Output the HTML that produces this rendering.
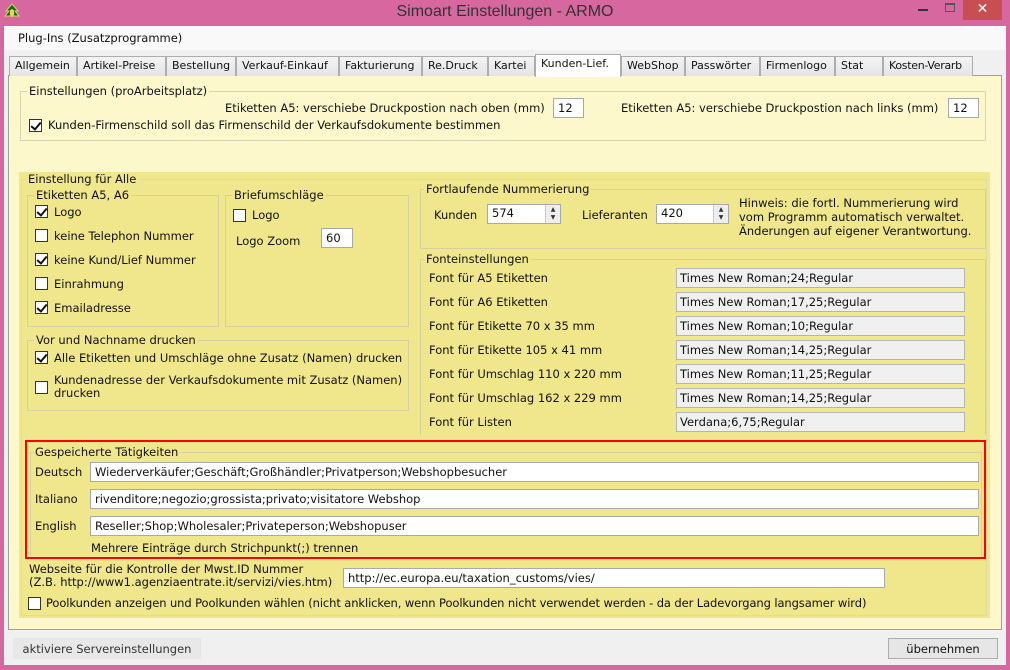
<!DOCTYPE html>
<html><head><meta charset="utf-8"><style>
*{margin:0;padding:0;box-sizing:border-box}
body{width:1010px;height:670px;background:#d6689f;font-family:"DejaVu Sans",Verdana,"Liberation Sans",sans-serif;font-size:11px;color:#111;position:relative;overflow:hidden}
.a{position:absolute;white-space:nowrap}
.win{position:absolute;left:4px;top:26px;width:1002px;height:639px;background:#f0f0f0}
.menu{position:absolute;left:4px;top:26px;width:1002px;height:24px;background:#f9f9f9}
.tab{position:absolute;top:56px;height:20px;background:linear-gradient(#f4f4f4,#e4e4e4);border:1px solid #adadad;border-bottom:none;padding:2px 0 0 5px;font-size:11px;white-space:nowrap;overflow:hidden}
.panel{position:absolute;left:8px;top:75px;width:994px;height:555px;background:#fdf8cc;border:1px solid #a0a0a0}
.grp{position:absolute;border:1px solid #d8d4b0}
.lg{position:absolute;top:-8px;left:6px;padding:0 2px;font-size:11.5px;white-space:nowrap}
.cb{position:absolute;width:13px;height:13px;border:1px solid #333;background:#fff}
.cb.c::after{content:"";position:absolute;left:3px;top:0px;width:4px;height:8px;border:solid #111;border-width:0 2px 2px 0;transform:rotate(40deg)}
.in{position:absolute;height:20px;background:#fff;border:1px solid #a9a9a9;padding:2px 4px;font-size:11.5px;white-space:nowrap;overflow:hidden}
.fb{position:absolute;left:676px;width:289px;height:20px;background:#f0f0f0;border:1px solid #b4b4b4;padding:2px 3px;font-size:11.5px}
.t{font-size:11.5px}
.sp{position:absolute;right:0;top:0;width:15px;height:18px;border-left:1px solid #ccc;background:#eee;font-size:6px;line-height:8px;text-align:center;color:#333;padding-top:1px}
.btn{position:absolute;height:21px;border:1px solid #adadad;background:#e6e6e6;font-size:11.5px;text-align:center;padding-top:3px}
</style></head><body>
<svg class="a" style="left:4px;top:3px" width="16" height="16" viewBox="0 0 16 16"><path d="M8 1L14 8H11L15 13H1L5 8H2Z" fill="#0d6b1a" stroke="#d8d060" stroke-width="1"/><ellipse cx="8" cy="10" rx="2.2" ry="4" fill="#e6d55a"/></svg>
<div class="a" style="left:0;width:1010px;top:3px;text-align:center;font-size:16px;color:#333;font-family:'Liberation Sans','DejaVu Sans',sans-serif">Simoart Einstellungen - ARMO</div>
<div class="a" style="left:918px;top:9px;width:10px;height:2px;background:#333"></div>
<div class="a" style="left:945px;top:3px;width:10px;height:9px;border:1px solid #555;border-top-width:2px"></div>
<div class="a" style="left:963px;top:0;width:39px;height:20px;background:#c74f51;color:#fff;text-align:center;font-size:14px;line-height:19px">✕</div>
<div class="win"></div>
<div class="menu"></div>
<div class="a t" style="left:18px;top:31px">Plug-Ins (Zusatzprogramme)</div>
<div class="panel"></div>
<div class="tab" style="left:9px;width:68px">Allgemein</div>
<div class="tab" style="left:77px;width:89px">Artikel-Preise</div>
<div class="tab" style="left:166px;width:70px">Bestellung</div>
<div class="tab" style="left:236px;width:103px">Verkauf-Einkauf</div>
<div class="tab" style="left:339px;width:83px">Fakturierung</div>
<div class="tab" style="left:422px;width:66px">Re.Druck</div>
<div class="tab" style="left:488px;width:47px">Kartei</div>
<div class="tab" style="left:535px;top:54px;height:23px;width:86px;background:#fff;padding-top:2px">Kunden-Lief.</div>
<div class="tab" style="left:621px;width:64px">WebShop</div>
<div class="tab" style="left:685px;width:75px">Passwörter</div>
<div class="tab" style="left:760px;width:75px">Firmenlogo</div>
<div class="tab" style="left:835px;width:48px">Stat</div>
<div class="tab" style="left:883px;width:90px;letter-spacing:-0.3px">Kosten-Verarb</div>

<div class="grp" style="left:20px;top:91px;width:966px;height:50px"><div class="lg" style="background:#fdf8cc">Einstellungen (proArbeitsplatz)</div></div>
<div class="a t" style="left:225px;top:101px">Etiketten A5: verschiebe Druckpostion nach oben (mm)</div>
<div class="in" style="left:553px;top:98px;width:31px">12</div>
<div class="a t" style="left:621px;top:101px">Etiketten A5: verschiebe Druckpostion nach links (mm)</div>
<div class="in" style="left:948px;top:98px;width:31px">12</div>
<div class="cb c" style="left:29px;top:119px"></div>
<div class="a t" style="left:48px;top:118px">Kunden-Firmenschild soll das Firmenschild der Verkaufsdokumente bestimmen</div>

<div class="a" style="left:19px;top:172px;width:971px;height:446px;background:#f0e68c"></div>
<div class="grp" style="left:21px;top:179px;width:966px;height:437px;border-color:#e2dca0"><div class="lg" style="background:#f0e68c;top:-8px;left:4px">Einstellung für Alle</div></div>
<div class="grp" style="left:27px;top:195px;width:192px;height:132px;border-color:#d6d0a0"><div class="lg" style="background:#f0e68c">Etiketten A5, A6</div></div>
<div class="cb c" style="left:35px;top:205px"></div><div class="a t" style="left:54px;top:205px">Logo</div>
<div class="cb" style="left:35px;top:229px"></div><div class="a t" style="left:54px;top:229px">keine Telephon Nummer</div>
<div class="cb c" style="left:35px;top:253px"></div><div class="a t" style="left:54px;top:253px">keine Kund/Lief Nummer</div>
<div class="cb" style="left:35px;top:277px"></div><div class="a t" style="left:54px;top:277px">Einrahmung</div>
<div class="cb c" style="left:35px;top:301px"></div><div class="a t" style="left:54px;top:301px">Emailadresse</div>
<div class="grp" style="left:225px;top:195px;width:184px;height:132px;border-color:#d6d0a0"><div class="lg" style="background:#f0e68c">Briefumschläge</div></div>
<div class="cb" style="left:233px;top:209px"></div><div class="a t" style="left:252px;top:208px">Logo</div>
<div class="a t" style="left:236px;top:234px">Logo Zoom</div>
<div class="in" style="left:321px;top:228px;width:32px">60</div>
<div class="grp" style="left:27px;top:340px;width:382px;height:71px;border-color:#d6d0a0"><div class="lg" style="background:#f0e68c">Vor und Nachname drucken</div></div>
<div class="cb c" style="left:35px;top:351px"></div><div class="a t" style="left:54px;top:351px">Alle Etiketten und Umschläge ohne Zusatz (Namen) drucken</div>
<div class="cb" style="left:35px;top:381px"></div><div class="a t" style="left:54px;top:374px;line-height:13px">Kundenadresse der Verkaufsdokumente mit Zusatz (Namen)<br>drucken</div>

<div class="grp" style="left:420px;top:189px;width:566px;height:60px;border-color:#d6d0a0"><div class="lg" style="background:#f0e68c;left:3px">Fortlaufende Nummerierung</div></div>
<div class="a t" style="left:434px;top:208px">Kunden</div>
<div class="in" style="left:487px;top:204px;width:74px;padding-top:1px">574<div class="sp">▲<br>▼</div></div>
<div class="a t" style="left:582px;top:208px">Lieferanten</div>
<div class="in" style="left:656px;top:204px;width:73px;padding-top:1px">420<div class="sp">▲<br>▼</div></div>
<div class="a t" style="left:739px;top:196px;line-height:14px">Hinweis: die fortl. Nummerierung wird<br>vom Programm automatisch verwaltet.<br>Änderungen auf eigener Verantwortung.</div>
<div class="grp" style="left:420px;top:259px;width:566px;height:176px;border-color:#d6d0a0;border-bottom:none"><div class="lg" style="background:#f0e68c;left:3px">Fonteinstellungen</div></div>
<div class="a t" style="left:429px;top:271px">Font für A5 Etiketten</div><div class="fb" style="top:268px">Times New Roman;24;Regular</div>
<div class="a t" style="left:429px;top:295px">Font für A6 Etiketten</div><div class="fb" style="top:292px">Times New Roman;17,25;Regular</div>
<div class="a t" style="left:429px;top:319px">Font für Etikette 70 x 35 mm</div><div class="fb" style="top:316px">Times New Roman;10;Regular</div>
<div class="a t" style="left:429px;top:343px">Font für Etikette 105 x 41 mm</div><div class="fb" style="top:340px">Times New Roman;14,25;Regular</div>
<div class="a t" style="left:429px;top:367px">Font für Umschlag 110 x 220 mm</div><div class="fb" style="top:364px">Times New Roman;11,25;Regular</div>
<div class="a t" style="left:429px;top:391px">Font für Umschlag 162 x 229 mm</div><div class="fb" style="top:388px">Times New Roman;14,25;Regular</div>
<div class="a t" style="left:429px;top:415px">Font für Listen</div><div class="fb" style="top:412px">Verdana;6,75;Regular</div>

<div class="a" style="left:25px;top:440px;width:961px;height:119px;border:2px solid #f00"></div>
<div class="grp" style="left:30px;top:452px;width:952px;height:104px;border-color:#d6d0a0;border-bottom:none"><div class="lg" style="background:#f0e68c;left:2px">Gespeicherte Tätigkeiten</div></div>
<div class="a t" style="left:35px;top:465px">Deutsch</div><div class="in" style="left:90px;top:462px;width:889px">Wiederverkäufer;Geschäft;Großhändler;Privatperson;Webshopbesucher</div>
<div class="a t" style="left:35px;top:492px">Italiano</div><div class="in" style="left:90px;top:489px;width:889px">rivenditore;negozio;grossista;privato;visitatore Webshop</div>
<div class="a t" style="left:35px;top:519px">English</div><div class="in" style="left:90px;top:516px;width:889px">Reseller;Shop;Wholesaler;Privateperson;Webshopuser</div>
<div class="a t" style="left:91px;top:541px">Mehrere Einträge durch Strichpunkt(;) trennen</div>

<div class="a t" style="left:29px;top:563px;line-height:13px">Webseite für die Kontrolle der Mwst.ID Nummer<br>(Z.B. http://www1.agenziaentrate.it/servizi/vies.htm)</div>
<div class="in" style="left:343px;top:568px;width:542px">http://ec.europa.eu/taxation_customs/vies/</div>
<div class="cb" style="left:28px;top:597px"></div>
<div class="a t" style="left:46px;top:596px;letter-spacing:-0.1px">Poolkunden anzeigen und Poolkunden wählen (nicht anklicken, wenn Poolkunden nicht verwendet werden - da der Ladevorgang langsamer wird)</div>

<div class="btn" style="left:13px;top:638px;width:188px;border-color:#e6e6e6;background:#e8e8e8;color:#333">aktiviere Servereinstellungen</div>
<div class="btn" style="left:888px;top:638px;width:110px">übernehmen</div>
</body></html>
